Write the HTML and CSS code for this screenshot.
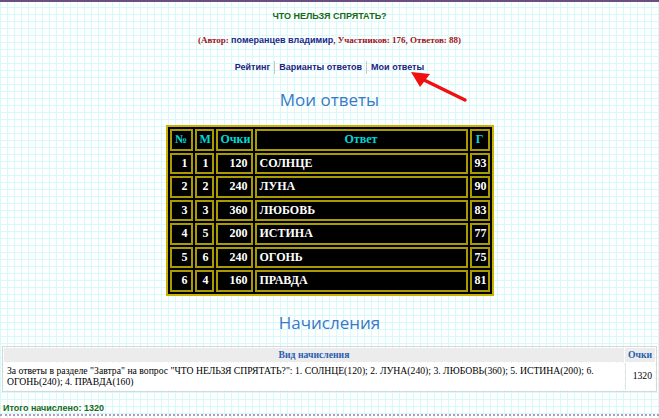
FILE: index.html
```html
<!DOCTYPE html>
<html lang="ru">
<head>
    <meta charset="UTF-8">
    <title>Мои ответы</title>
    <link rel="stylesheet" href="styles.css">
</head>
<body>
    <div class="page">
        <div class="q-title">ЧТО НЕЛЬЗЯ СПРЯТАТЬ?</div>
        <div class="q-info">(Автор: <span class="author">померанцев владимир</span>, Участников: 176, Ответов: 88)</div>

        <div class="menu">
            <a href="#">Рейтинг</a><span class="sep"></span><a href="#">Варианты ответов</a><span class="sep"></span><a href="#" class="current">Мои ответы</a>
            <svg class="arrow" width="70" height="40" viewBox="0 0 70 40">
                <line x1="59" y1="32" x2="16" y2="11" stroke="#f01010" stroke-width="3.5" stroke-linecap="round"/>
                <polygon points="5,4 24,6 14,19" fill="#f01010"/>
            </svg>
        </div>

        <h2 class="head">Мои ответы</h2>

        <table class="answers">
            <tr><th class="c1">№</th><th class="c2">М</th><th class="c3">Очки</th><th class="c4">Ответ</th><th class="c5">Г</th></tr>
            <tr><td>1</td><td>1</td><td>120</td><td class="word">СОЛНЦЕ</td><td>93</td></tr>
            <tr><td>2</td><td>2</td><td>240</td><td class="word">ЛУНА</td><td>90</td></tr>
            <tr><td>3</td><td>3</td><td>360</td><td class="word">ЛЮБОВЬ</td><td>83</td></tr>
            <tr><td>4</td><td>5</td><td>200</td><td class="word">ИСТИНА</td><td>77</td></tr>
            <tr><td>5</td><td>6</td><td>240</td><td class="word">ОГОНЬ</td><td>75</td></tr>
            <tr><td>6</td><td>4</td><td>160</td><td class="word">ПРАВДА</td><td>81</td></tr>
        </table>

        <h2 class="head head-low">Начисления</h2>

        <table class="credits">
            <tr><th>Вид начисления</th><th class="pts">Очки</th></tr>
            <tr>
                <td>За ответы в разделе "Завтра" на вопрос "ЧТО НЕЛЬЗЯ СПРЯТАТЬ?": 1. СОЛНЦЕ(120); 2. ЛУНА(240); 3. ЛЮБОВЬ(360); 5. ИСТИНА(200); 6. ОГОНЬ(240); 4. ПРАВДА(160)</td>
                <td class="pts-val">1320</td>
            </tr>
        </table>

        <div class="total">Итого начислено: 1320</div>
    </div>
</body>
</html>
```

FILE: styles.css
```css
* {
    box-sizing: border-box;
}

body {
    margin: 0;
    background-color: #fff;
    background-image:
        linear-gradient(to right, #d6fafa 1px, transparent 1px),
        linear-gradient(to bottom, #d6fafa 1px, transparent 1px);
    background-size: 7px 7px;
    border-top: 2px solid #6b4f80;
    font-family: "Liberation Sans", Arial, sans-serif;
    font-size: 9px;
}

.page {
    padding: 0 2px;
    border-bottom: 2px dotted #b59ac0;
}

.q-title {
    text-align: center;
    color: #166a16;
    font-weight: bold;
    padding-top: 8px;
    line-height: 12px;
}

.q-info {
    margin-top: 12px;
    line-height: 12px;
    text-align: center;
    font-family: "Liberation Serif", serif;
    font-weight: bold;
    color: #a0121a;
}

.author {
    font-family: "Liberation Sans", Arial, sans-serif;
    color: #1a2a8a;
}

.menu {
    position: relative;
    display: flex;
    justify-content: center;
    align-items: center;
    height: 14px;
    margin-top: 14px;
}

.menu a {
    color: #1a237e;
    font-weight: bold;
    text-decoration: none;
    padding: 0 4px;
}

.menu .sep {
    display: inline-block;
    width: 1px;
    height: 13px;
    background: #c6c6c6;
}

.arrow {
    position: absolute;
    left: 404px;
    top: 8px;
}

.head {
    margin: 14px 0 0;
    text-align: center;
    font-family: "Open Sans", sans-serif;
    font-weight: normal;
    font-size: 17px;
    line-height: 24px;
    color: #3a78c6;
}

.head-low {
    margin-top: 15px;
}

.answers {
    margin: 13px auto 0;
    width: 328px;
    table-layout: fixed;
    background: #000;
    border: 2px solid #c8b400;
    border-spacing: 2px;
    font-family: "Liberation Serif", serif;
    font-weight: bold;
    font-size: 12px;
    color: #fff;
}

.answers th,
.answers td {
    border: 2px solid #a89a00;
    height: 21.5px;
    padding: 0 3px;
    text-align: right;
}

.answers th {
    color: #00d8d8;
    text-align: center;
}

.answers .c1 { width: 23px; }
.answers .c2 { width: 19px; }
.answers .c3 { width: 37px; }
.answers .c4 { width: 213px; }
.answers .c5 { width: 20px; }

.answers .word {
    text-align: left;
}

.credits {
    width: 100%;
    margin-top: 11px;
    border: 1px solid #d8d8d8;
    border-spacing: 1px;
    font-family: "Liberation Serif", serif;
    font-size: 9.7px;
}

.credits th {
    background: #ececec;
    color: #2a5db0;
    font-weight: bold;
    height: 14px;
    padding: 0 2px;
}

.credits td {
    background: #fff;
    padding: 2px 3px;
    line-height: 11.5px;
}

.credits .pts {
    width: 30px;
}

.credits .pts-val {
    text-align: right;
    border-left: 1px solid #e4e4e4;
}

.total {
    color: #166a16;
    font-weight: bold;
    margin-top: 10px;
    line-height: 12px;
    padding-left: 1px;
}
```
